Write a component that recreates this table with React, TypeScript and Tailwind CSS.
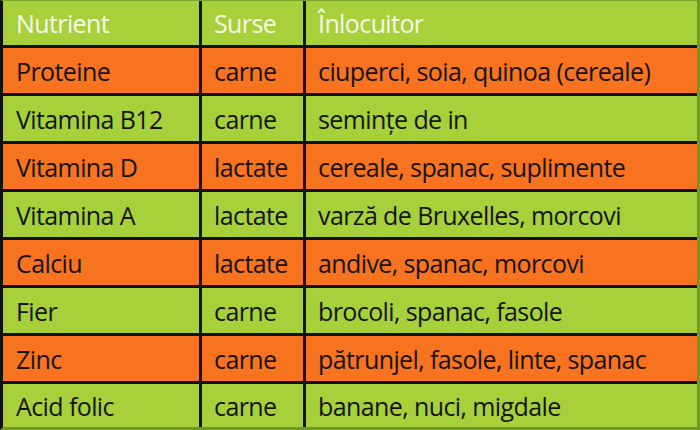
const rows = [
  { n: "Proteine", s: "carne", i: "ciuperci, soia, quinoa (cereale)" },
  { n: "Vitamina B12", s: "carne", i: "semințe de in" },
  { n: "Vitamina D", s: "lactate", i: "cereale, spanac, suplimente" },
  { n: "Vitamina A", s: "lactate", i: "varză de Bruxelles, morcovi" },
  { n: "Calciu", s: "lactate", i: "andive, spanac, morcovi" },
  { n: "Fier", s: "carne", i: "brocoli, spanac, fasole" },
  { n: "Zinc", s: "carne", i: "pătrunjel, fasole, linte, spanac" },
  { n: "Acid folic", s: "carne", i: "banane, nuci, migdale" },
];

export default function App() {
  return (
    <div
      className="w-[700px] h-[430px] bg-[#5f8a22] border-t border-b-[3px] border-r-[3px] border-t-[#7da52c] border-b-[#6f9a2a] border-r-[#6f9a2a] border-l-[3px] border-l-[#111] overflow-hidden"
      style={{ fontFamily: '"Open Sans", "Noto Sans", sans-serif' }}
    >
      <div className="grid h-full grid-cols-[196px_101px_1fr] grid-rows-[44px_repeat(7,45px)_1fr] gap-[3px] bg-[#111] text-[25px] leading-none tracking-[-0.6px]">
        <div className="flex items-center bg-[#a7d03a] pl-[13px] pt-[1px] text-[#f6f9ea]">Nutrient</div>
        <div className="flex items-center bg-[#a7d03a] pl-[12px] pt-[1px] text-[#f6f9ea]">Surse</div>
        <div className="flex items-center bg-[#a7d03a] pl-[12px] pt-[1px] text-[#f6f9ea]">Înlocuitor</div>
        {rows.map((r, idx) => {
          const bg = idx % 2 === 0 ? "bg-[#f7731f]" : "bg-[#a7d03a]";
          return [
            <div key={r.n + "n"} className={`flex items-center pl-[13px] pt-[1px] text-[#141414] ${bg}`}>{r.n}</div>,
            <div key={r.n + "s"} className={`flex items-center pl-[12px] pt-[1px] text-[#141414] ${bg}`}>{r.s}</div>,
            <div key={r.n + "i"} className={`flex items-center pl-[12px] pt-[1px] text-[#141414] ${bg}`}>{r.i}</div>,
          ];
        })}
      </div>
    </div>
  );
}
